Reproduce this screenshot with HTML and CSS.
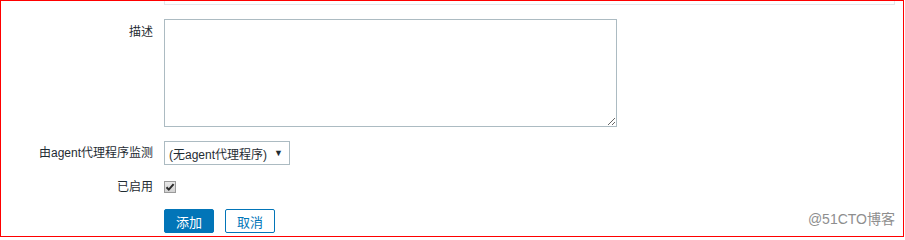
FILE: index.html
```html
<!DOCTYPE html>
<html lang="zh-CN">
<head>
<meta charset="utf-8">
<title>表单</title>
<link rel="stylesheet" href="styles.css">
</head>
<body>
<div class="frame">
  <div class="form">
    <div class="row row-prev">
      <div class="label"></div>
      <div class="ctl"><div class="prev-box"></div></div>
    </div>
    <div class="row row-desc">
      <div class="label label-top">描述</div>
      <div class="ctl"><textarea class="textarea"></textarea></div>
    </div>
    <div class="row row-select">
      <div class="label">由agent代理程序监测</div>
      <div class="ctl">
        <div class="select"><span class="select-text">(无agent代理程序)</span><span class="select-arrow">▼</span></div>
      </div>
    </div>
    <div class="row row-check">
      <div class="label">已启用</div>
      <div class="ctl">
        <span class="checkbox"><svg width="10" height="10" viewBox="0 0 10 10"><path d="M1.5 5.2 L3.8 7.6 L8.6 2.2" fill="none" stroke="#2b2b2b" stroke-width="2"/></svg></span>
      </div>
    </div>
    <div class="row row-buttons">
      <div class="label"></div>
      <div class="ctl buttons">
        <button class="btn btn-primary">添加</button>
        <button class="btn btn-alt">取消</button>
      </div>
    </div>
  </div>
  <div class="watermark">@51CTO博客</div>
</div>
</body>
</html>
```

FILE: styles.css
```css
* { box-sizing: border-box; }
html, body { margin: 0; padding: 0; background: #fff; }
body {
  font-family: "Liberation Sans", Arial, "Noto Sans CJK SC", sans-serif;
  font-size: 12px;
  color: #1f2c33;
}
.frame {
  position: relative;
  width: 904px;
  height: 237px;
  border: 1px solid #ff0000;
  overflow: hidden;
}
.form {
  display: flex;
  flex-direction: column;
}
.row {
  display: flex;
  align-items: center;
  column-gap: 11px;
}
.label {
  width: 152px;
  flex: none;
  text-align: right;
  line-height: 14px;
  white-space: nowrap;
}
.label-top { align-self: flex-start; padding-top: 6px; }
.ctl { flex: 1; display: flex; align-items: center; }
.prev-box {
  width: 731px;
  height: 4px;
  border: 1px solid #e3e8eb;
  border-top: none;
}
.row-desc { margin-top: 14px; }
.textarea {
  display: block;
  width: 453px;
  height: 108px;
  margin: 0;
  border: 1px solid #acbbc2;
  background: #fff;
  resize: both;
  font: inherit;
}
.row-select { margin-top: 14px; height: 24px; }
.select {
  width: 126px;
  height: 24px;
  border: 1px solid #acbbc2;
  display: flex;
  align-items: center;
  justify-content: space-between;
  padding: 0 6px 0 4px;
  color: #1f2c33;
  white-space: nowrap;
}
.select-arrow { font-size: 9px; color: #1f2c33; }
.row-check { margin-top: 10px; height: 24px; }
.checkbox {
  width: 12px;
  height: 12px;
  border: 1px solid #9a9a9a;
  background: linear-gradient(#e8e8e8, #d2d2d2);
  display: flex;
  align-items: center;
  justify-content: center;
}
.checkbox svg { display: block; }
.row-buttons { margin-top: 10px; height: 24px; }
.buttons { column-gap: 11px; }
.btn {
  height: 24px;
  width: 50px;
  margin: 0;
  padding: 0;
  font-family: inherit;
  font-size: 13px;
  border-radius: 2px;
  cursor: pointer;
}
.btn-primary {
  background: #0275b8;
  border: 1px solid #0275b8;
  color: #fff;
}
.btn-alt {
  background: #fff;
  border: 1px solid #0275b8;
  color: #0275b8;
}
.watermark {
  position: absolute;
  right: 8px;
  bottom: 9px;
  font-size: 14px;
  line-height: 16px;
  color: #8e8e8e;
  white-space: nowrap;
}
```
